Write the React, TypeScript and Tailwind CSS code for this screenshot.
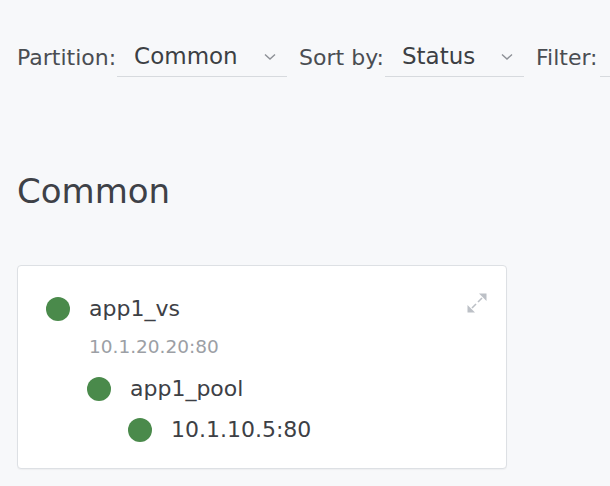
import React, { FunctionComponent } from 'react'

type SelectProps = {
  value: string, width: string
}

const Chevron = () => (
  <svg width="12" height="8" viewBox="0 0 12 8" className="mt-[13px] shrink-0" fill="none" stroke="#8d9096" strokeWidth="1.4">
    <path d="M1 1.5 L6 6 L11 1.5" />
  </svg>
)

const Select: FunctionComponent<SelectProps> = ({ value, width }) => {
  return (
    <div className={`${width} shrink-0 ml-[1px] h-[37px] border-b border-[#d7dade] flex items-start justify-between pl-[17px] pr-[11px]`}>
      <span className="text-[23px] leading-[32px] text-[#3c3f44]">{value}</span>
      <Chevron />
    </div>
  )
}

type NodeProps = {
  name: string, indent: string, top: string
}

const Node: FunctionComponent<NodeProps> = ({ name, indent, top }) => {
  return (
    <div className={`${indent} ${top} h-[34px] flex items-center`}>
      <span className="w-6 h-6 rounded-full bg-[#4a8a4b] shrink-0" />
      <span className="ml-[19px] text-[22px] text-[#3d4045] leading-[34px]">{name}</span>
    </div>
  )
}

const ExpandIcon = () => (
  <svg width="20" height="20" viewBox="0 0 20 20" className="absolute top-[27px] right-[19px]" fill="#bcc0c6" stroke="#bcc0c6" strokeWidth="1.6">
    {/* top right arrow */}
    <polygon points="19.5,0.5 19.5,8 12,0.5" stroke="none" />
    <line x1="15" y1="5" x2="11" y2="9" />
    {/* bottom left arrow */}
    <polygon points="0.5,19.5 0.5,12 8,19.5" stroke="none" />
    <line x1="5" y1="15" x2="9" y2="11" />
  </svg>
)

const App: FunctionComponent = () => {
  return (
    <div className="min-h-screen bg-[#f7f8fa] px-[17px] pt-[40px] font-['DejaVu_Sans',sans-serif] overflow-hidden">

      {/* filter bar */}
      <div className="flex items-start whitespace-nowrap flex-nowrap">
        <span className="shrink-0 text-[22px] leading-[36px] text-[#4a4d52]">Partition:</span>
        <Select value="Common" width="w-[170px]" />
        <span className="shrink-0 ml-[12px] text-[22px] leading-[36px] text-[#4a4d52]">Sort by:</span>
        <Select value="Status" width="w-[139px]" />
        <span className="shrink-0 ml-[12px] text-[22px] leading-[36px] text-[#4a4d52]">Filter:</span>
        <div className="ml-[2px] w-[200px] h-[37px] border-b border-[#d7dade] shrink-0" />
      </div>

      <h2 className="mt-[94px] text-[34px] leading-[40px] text-[#3e4147] font-normal">Common</h2>

      {/* card */}
      <div className="relative mt-[54px] w-[490px] bg-white border border-[#dde0e4] rounded-[4px] shadow-[0_1px_1px_rgba(0,0,0,0.04)] pl-[28px] pt-[26px] pb-[21px]">
        <ExpandIcon />
        <Node name="app1_vs" indent="" top="" />
        <div className="ml-[43px] mt-[8px] text-[18.5px] leading-[26px] text-[#9c9fa5]">10.1.20.20:80</div>
        <Node name="app1_pool" indent="ml-[41px]" top="mt-[12px]" />
        <Node name="10.1.10.5:80" indent="ml-[82px]" top="mt-[7px]" />
      </div>
    </div>
  )
}

export default App
